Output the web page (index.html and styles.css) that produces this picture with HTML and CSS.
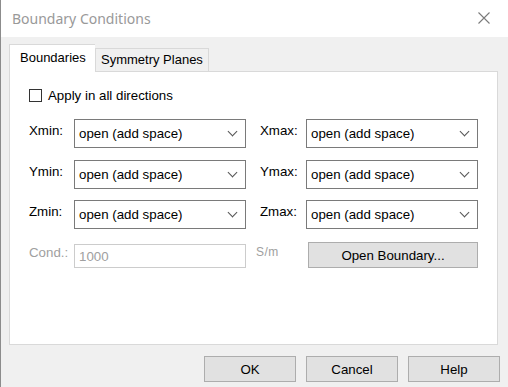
FILE: index.html
```html
<!DOCTYPE html>
<html lang="en">
<head>
    <meta charset="UTF-8">
    <title>Boundary Conditions</title>
    <link rel="stylesheet" href="styles.css">
</head>
<body>
    <div class="janela">
        <div class="titulo">
            <span>Boundary Conditions</span>
            <svg class="fechar" width="12" height="12" viewBox="0 0 12 12">
                <path d="M0.5 0.5 L11.5 11.5 M11.5 0.5 L0.5 11.5" stroke="#7a7a7a" stroke-width="1.1" fill="none"/>
            </svg>
        </div>

        <div class="corpo">
            <div class="abas">
                <div class="aba ativa">Boundaries</div>
                <div class="aba">Symmetry Planes</div>
            </div>

            <div class="painel">
                <label class="todas">
                    <span class="caixa"></span>
                    Apply in all directions
                </label>

                <div class="grade">
                    <span class="rotulo">Xmin:</span>
                    <div class="combo">open (add space)<i></i></div>
                    <span class="rotulo dir">Xmax:</span>
                    <div class="combo">open (add space)<i></i></div>

                    <span class="rotulo">Ymin:</span>
                    <div class="combo">open (add space)<i></i></div>
                    <span class="rotulo dir">Ymax:</span>
                    <div class="combo">open (add space)<i></i></div>

                    <span class="rotulo">Zmin:</span>
                    <div class="combo">open (add space)<i></i></div>
                    <span class="rotulo dir">Zmax:</span>
                    <div class="combo">open (add space)<i></i></div>

                    <span class="rotulo off">Cond.:</span>
                    <div class="campo">1000</div>
                    <span class="rotulo off unid">S/m</span>
                    <button class="botao aberto">Open Boundary...</button>
                </div>
            </div>

            <div class="rodape">
                <button class="botao">OK</button>
                <button class="botao">Cancel</button>
                <button class="botao">Help</button>
            </div>
        </div>
    </div>
</body>
</html>
```

FILE: styles.css
```css
* {
    padding: 0;
    margin: 0;
    box-sizing: border-box;
}

body {
    width: 508px;
    height: 387px;
    overflow: hidden;
    font-family: "Liberation Sans", Arial, sans-serif;
    font-size: 13.3px;
    color: #000;
}

.janela {
    height: 387px;
    border-left: 1px solid #8c8c8c;
    background-color: #f0f0f0;
}

.titulo {
    display: flex;
    align-items: center;
    justify-content: space-between;
    height: 37px;
    padding: 0 18px 1px 11px;
    background-color: white;
    font-family: "Noto Sans", "Open Sans", sans-serif;
    font-size: 14px;
    color: #999;
}

.corpo {
    padding: 7px 9px 0 8px;
}

.abas {
    display: flex;
    align-items: flex-end;
    height: 27px;
}

.aba {
    height: 23px;
    padding: 3px 5px 0 5px;
    background-color: #f0f0f0;
    border: 1px solid #d9d9d9;
    border-bottom: none;
    font-size: 13px;
}

.aba.ativa {
    height: 28px;
    width: 86px;
    padding: 5px 0 0 10px;
    background-color: white;
    margin-bottom: -1px;
    position: relative;
    z-index: 1;
    border-right: none;
}

.painel {
    height: 274px;
    margin-right: 1px;
    background-color: white;
    border: 1px solid #d9d9d9;
    padding: 17px 0 0 19px;
}

.todas {
    display: flex;
    align-items: center;
    gap: 6px;
    height: 13px;
}

.caixa {
    width: 13px;
    height: 13px;
    border: 1px solid #333;
    background-color: white;
}

.grade {
    display: grid;
    grid-template-columns: 45px 172px 60px 172px;
    grid-auto-rows: 29px;
    row-gap: 11.5px;
    margin-top: 17px;
    align-items: center;
}

.rotulo {
    align-self: start;
    padding-top: 4px;
}

.rotulo.dir {
    padding-left: 14px;
}

.rotulo.off {
    color: #a0a0a0;
    padding-top: 4px;
}

.rotulo.unid {
    padding-left: 10px;
    font-size: 12px;
    letter-spacing: 0.5px;
}

.combo {
    position: relative;
    height: 29px;
    border: 1px solid #7a7a7a;
    padding: 6px 0 0 4px;
    background-color: white;
}

.combo i {
    position: absolute;
    right: 9px;
    top: 8px;
    width: 7px;
    height: 7px;
    border-right: 1px solid #555;
    border-bottom: 1px solid #555;
    transform: rotate(45deg);
}

.campo {
    height: 24px;
    border: 1px solid #cccccc;
    padding: 4px 0 0 4px;
    color: #a0a0a0;
    margin-top: 1px;
}

.botao {
    height: 26px;
    background-color: #e1e1e1;
    border: 1px solid #adadad;
    font-family: "Liberation Sans", Arial, sans-serif;
    font-size: 13.3px;
    color: #000;
}

.botao.aberto {
    width: 170px;
    margin: 0 0 0 2px;
}

.rodape {
    display: flex;
    justify-content: flex-end;
    gap: 10px;
    margin-right: -1px;
    padding: 11px 0 0 0;
}

.rodape .botao {
    width: 92px;
}
```
